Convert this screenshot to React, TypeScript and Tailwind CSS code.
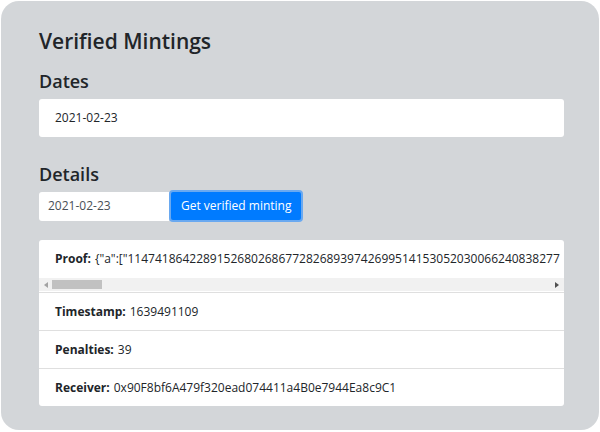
import React from 'react';

const proof = '{"a":["114741864228915268026867728268939742699514153052030066240838277';

const Row = ({ label, value }: { label: string; value: string }) => (
  <div className="h-[38px] px-4 flex items-center border-t border-[#dfdfdf] text-[12px] text-[#212529]">
    <span className="font-bold mr-1">{label}</span>
    <span>{value}</span>
  </div>
);

const App = () => {
  return (
    <div className="w-[600px] h-[432px] bg-white p-[1px] font-['Open_Sans',sans-serif]">
      <div className="h-[429px] bg-[#d3d6d9] rounded-[18px] pl-[38px] pr-[35px] pt-[26px]">
        <h1 className="text-[21px] leading-[28px] font-semibold text-[#212529]">Verified Mintings</h1>
        <h2 className="mt-[14px] text-[18px] leading-[24px] font-semibold text-[#212529]">Dates</h2>
        <div className="mt-[6px] h-[38px] bg-white rounded-[3px] px-4 flex items-center text-[12px] text-[#212529]">
          2021-02-23
        </div>

        <h2 className="mt-[25px] text-[18px] leading-[24px] font-semibold text-[#212529]">Details</h2>
        <div className="mt-[4px] flex items-center">
          <div className="w-[130px] h-[29px] bg-white rounded-l-[3px] pl-[9px] flex items-center text-[12px] text-[#495057]">
            2021-02-23
          </div>
          <button className="h-[32px] px-[10px] bg-[#007bff] text-white text-[12px] rounded-[4px] border-2 border-[#6aa9f0]">
            Get verified minting
          </button>
        </div>

        <div className="mt-[18px] bg-white rounded-[3px] overflow-hidden">
          <div className="h-[52px] flex flex-col">
            <div className="flex-1 pl-4 pt-[10px] whitespace-nowrap overflow-hidden text-[12px] text-[#212529]">
              <span className="font-bold mr-1">Proof:</span>
              <span>{proof}</span>
            </div>
            <div className="h-[13px] bg-[#f1f1f1] flex items-center px-[4px] mb-[1px]">
              <svg width="6" height="8" viewBox="0 0 6 8">
                <path d="M5 1 L1 4 L5 7 Z" fill="#a3a3a3" />
              </svg>
              <div className="ml-[3px] w-[50px] h-[9px] bg-[#c1c1c1]" />
              <div className="flex-1" />
              <svg width="6" height="8" viewBox="0 0 6 8">
                <path d="M1 1 L5 4 L1 7 Z" fill="#505050" />
              </svg>
            </div>
          </div>
          <Row label="Timestamp:" value="1639491109" />
          <Row label="Penalties:" value="39" />
          <Row label="Receiver:" value="0x90F8bf6A479f320ead074411a4B0e7944Ea8c9C1" />
        </div>
      </div>
    </div>
  );
};

export default App;
